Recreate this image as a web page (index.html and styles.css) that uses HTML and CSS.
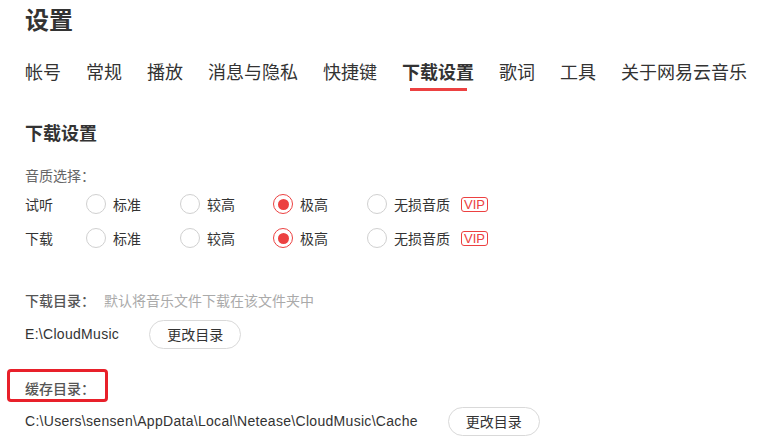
FILE: index.html
```html
<!DOCTYPE html>
<html lang="zh-CN">
<head>
<meta charset="utf-8">
<title>设置</title>
<link rel="stylesheet" href="styles.css">
</head>
<body>
<div class="page">
  <h1 class="title">设置</h1>
  <nav class="tabs">
    <span class="tab">帐号</span>
    <span class="tab">常规</span>
    <span class="tab">播放</span>
    <span class="tab">消息与隐私</span>
    <span class="tab">快捷键</span>
    <span class="tab active">下载设置</span>
    <span class="tab">歌词</span>
    <span class="tab">工具</span>
    <span class="tab">关于网易云音乐</span>
  </nav>

  <h2 class="section-title">下载设置</h2>

  <div class="label">音质选择：</div>
  <div class="quality-row">
    <span class="row-name">试听</span>
    <span class="option"><span class="radio"></span>标准</span>
    <span class="option"><span class="radio"></span>较高</span>
    <span class="option"><span class="radio checked"></span>极高</span>
    <span class="option"><span class="radio"></span>无损音质<span class="vip">VIP</span></span>
  </div>
  <div class="quality-row">
    <span class="row-name">下载</span>
    <span class="option"><span class="radio"></span>标准</span>
    <span class="option"><span class="radio"></span>较高</span>
    <span class="option"><span class="radio checked"></span>极高</span>
    <span class="option"><span class="radio"></span>无损音质<span class="vip">VIP</span></span>
  </div>

  <div class="dir-label download-label"><span class="dir-name">下载目录：</span><span class="hint">默认将音乐文件下载在该文件夹中</span></div>
  <div class="dir-row">
    <span class="path">E:\CloudMusic</span>
    <button class="btn">更改目录</button>
  </div>

  <div class="dir-label cache-label"><span class="dir-name">缓存目录：</span></div>
  <div class="dir-row cache-row">
    <span class="path">C:\Users\sensen\AppData\Local\Netease\CloudMusic\Cache</span>
    <button class="btn">更改目录</button>
  </div>

  <div class="annotation"></div>
</div>
</body>
</html>
```

FILE: styles.css
```css
html, body {
  margin: 0;
  padding: 0;
  background: #fff;
}

body {
  font-family: "Noto Sans CJK SC", "Liberation Sans", sans-serif;
  color: #333;
  font-size: 14px;
}

.page {
  position: relative;
  padding-left: 25px;
  width: 734px;
  height: 446px;
  overflow: hidden;
}

.title {
  margin: 0;
  font-size: 24px;
  font-weight: 700;
  line-height: 38px;
  color: #333;
}

.tabs {
  display: flex;
  align-items: flex-start;
  gap: 25px;
  margin-top: 21px;
  height: 32px;
}

.tab {
  flex-shrink: 0;
  white-space: nowrap;
  font-size: 18px;
  line-height: 24px;
  color: #333;
  display: flex;
  flex-direction: column;
  align-items: center;
}

.tab.active {
  font-weight: 700;
}

.tab.active::after {
  content: "";
  display: block;
  width: 57px;
  height: 3px;
  margin-top: 5px;
  background: #ec4141;
}

.section-title {
  margin: 29px 0 0;
  font-size: 18px;
  font-weight: 700;
  line-height: 24px;
  color: #333;
}

.label {
  margin-top: 21px;
  line-height: 20px;
  color: #666;
}

.quality-row {
  display: grid;
  grid-template-columns: 61px 94px 93px 94px auto;
  align-items: center;
  height: 34px;
}

.label + .quality-row {
  margin-top: 2px;
}

.row-name {
  color: #333;
}

.option {
  display: flex;
  align-items: center;
  gap: 7px;
  color: #333;
}

.radio {
  box-sizing: border-box;
  width: 20px;
  height: 20px;
  border-radius: 50%;
  border: 1px solid #d0d0d0;
  background: #fff;
  display: flex;
  align-items: center;
  justify-content: center;
}

.radio.checked {
  border: 1.5px solid #ec4141;
}

.radio.checked::before {
  content: "";
  width: 11px;
  height: 11px;
  border-radius: 50%;
  background: #ec4141;
}

.vip {
  box-sizing: border-box;
  margin-left: 4px;
  width: 27px;
  height: 15px;
  border: 1px solid #ec4141;
  border-radius: 3px;
  color: #ec4141;
  font-family: "Liberation Sans", sans-serif;
  font-size: 13px;
  line-height: 13px;
  text-align: center;
}

.dir-label {
  line-height: 20px;
}

.download-label {
  margin-top: 35px;
}

.cache-label {
  margin-top: 29px;
}

.dir-name {
  color: #555;
  font-weight: 500;
}

.hint {
  margin-left: 9px;
  color: #aaa;
}

.dir-row {
  display: flex;
  align-items: center;
  height: 30px;
  margin-top: 9px;
}

.cache-row {
  margin-top: 8px;
}

.path {
  font-family: "Liberation Sans", sans-serif;
  font-size: 14px;
  letter-spacing: 0.3px;
  color: #333;
}

.btn {
  box-sizing: border-box;
  width: 92px;
  height: 29px;
  margin-left: 30px;
  border: 1px solid #d9d9d9;
  border-radius: 15px;
  background: #fff;
  font-family: "Noto Sans CJK SC", sans-serif;
  font-size: 14px;
  color: #333;
  padding: 0;
}

.annotation {
  position: absolute;
  left: 7px;
  top: 369px;
  width: 101px;
  height: 33px;
  box-sizing: border-box;
  border: 3px solid #e8202a;
  border-radius: 4px;
}
```
